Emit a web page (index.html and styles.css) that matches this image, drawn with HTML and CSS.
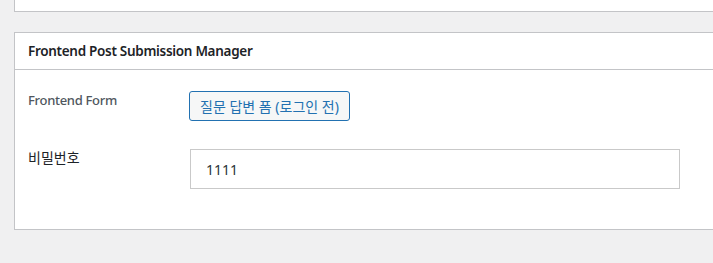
FILE: index.html
```html
<!DOCTYPE html>
<html lang="ko">
<head>
    <meta charset="UTF-8">
    <meta name="viewport" content="width=device-width, initial-scale=1.0">
    <title>Frontend Post Submission Manager</title>
    <link rel="stylesheet" href="styles.css">
</head>
<body>

<div class="postbox postbox-top"></div>

<div class="postbox">
    <h2 class="postbox-title">Frontend Post Submission Manager</h2>
    <div class="postbox-inside">
        <div class="form-table">
            <div class="form-label">Frontend Form</div>
            <div class="form-field">
                <button class="button">질문 답변 폼 (로그인 전)</button>
            </div>
            <div class="form-label form-label-dark">비밀번호</div>
            <div class="form-field">
                <input type="text" class="regular-text" value="1111">
            </div>
        </div>
    </div>
</div>

</body>
</html>
```

FILE: styles.css
```css
body {
    margin: 0;
    background: #f0f0f1;
    font-family: "Noto Sans", "Noto Sans CJK KR", sans-serif;
    font-size: 14px;
    color: #1d2327;
}
.postbox {
    margin-left: 14px;
    background: #fff;
    border: 1px solid #c3c4c7;
    border-right: none;
}
.postbox-top {
    height: 11px;
    border-top: none;
    margin-bottom: 20px;
}
.postbox-title {
    margin: 0;
    padding: 8px 13px;
    font-size: 13.5px;
    font-weight: 600;
    line-height: 20px;
    letter-spacing: -0.3px;
    border-bottom: 1px solid #c3c4c7;
}
.postbox-inside {
    padding: 21px 12px 40px 13px;
}
.form-table {
    display: grid;
    grid-template-columns: 161px 490px;
    row-gap: 28px;
}
.form-label {
    margin-top: -1px;
    line-height: 20px;
    font-size: 13px;
    font-weight: 500;
    letter-spacing: -0.3px;
    color: #50575e;
}
.form-label-dark {
    font-size: 14px;
    font-weight: 400;
    letter-spacing: 0;
    color: #1d2327;
}
.button {
    height: 30px;
    padding: 0 10px;
    font-family: "Noto Sans", "Noto Sans CJK KR", sans-serif;
    font-size: 14px;
    color: #2271b1;
    background: #f6f7f7;
    border: 1px solid #2271b1;
    border-radius: 3px;
    cursor: pointer;
}
.regular-text {
    display: block;
    width: 100%;
    height: 40px;
    box-sizing: border-box;
    margin-left: 1px;
    padding: 0 15px;
    font-family: "Noto Sans", "Noto Sans CJK KR", sans-serif;
    font-size: 14px;
    color: #2c3338;
    border: 1px solid #c9c9c9;
    border-radius: 0;
}
```
